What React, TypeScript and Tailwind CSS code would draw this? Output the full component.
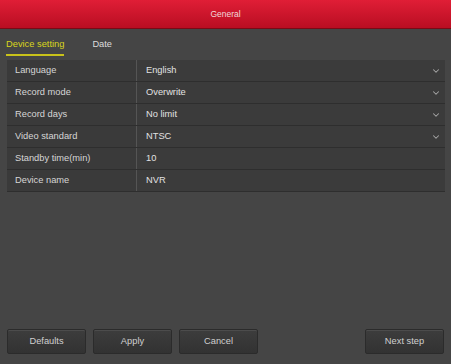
import { ChevronDown } from 'lucide-react'

interface Row {
  label: string
  value: string
  select?: boolean
}

const rows: Row[] = [
  { label: 'Language', value: 'English', select: true },
  { label: 'Record mode', value: 'Overwrite', select: true },
  { label: 'Record days', value: 'No limit', select: true },
  { label: 'Video standard', value: 'NTSC', select: true },
  { label: 'Standby time(min)', value: '10' },
  { label: 'Device name', value: 'NVR' },
]

function Button({ label, className }: { label: string; className?: string }) {
  return (
    <button
      className={`h-[25px] w-[79px] rounded-[2px] border border-[#2b2b2b] bg-gradient-to-b from-[#3d3d3d] to-[#323232] text-[9.3px] text-[#d0d0d0] shadow-[inset_0_1px_0_#4c4c4c] ${className ?? ''}`}
    >
      {label}
    </button>
  )
}

export default function App() {
  return (
    <div className="flex h-[364px] w-[451px] flex-col bg-[#454545] font-['Liberation_Sans',Arial,sans-serif] text-[9.3px]">
      <div className="flex h-[28px] items-center justify-center bg-gradient-to-b from-[#e01e36] to-[#b90d22] text-[8.5px] text-[#f3d6d9] shadow-[0_1px_0_#7a0a16]">
        General
      </div>

      <div className="flex h-[32px] items-end gap-[28px] px-[6px] pb-[8px]">
        <div className="relative text-[#d9d61c]">
          Device setting
          <div className="absolute -bottom-[4px] left-0 h-[2px] w-full bg-[#c9c21a]" />
        </div>
        <div className="text-[#dcdcdc]">Date</div>
      </div>

      <div className="mx-[7px] flex w-[438px] flex-col bg-[#2f2f2f]">
        {rows.map((row) => (
          <div key={row.label} className="flex h-[22px] border-b border-[#2e2e2e]">
            <div className="flex w-[130px] items-center border-r border-[#555] bg-[#3a3a3a] pl-[8px] text-[#d6d6d6]">
              {row.label}
            </div>
            <div className="flex flex-1 items-center justify-between bg-[#3b3b3b] pl-[9px] pr-[4px] text-[#e2e2e2]">
              <span>{row.value}</span>
              {row.select && <ChevronDown size={10} strokeWidth={2.5} className="text-[#a8a8a8]" />}
            </div>
          </div>
        ))}
      </div>

      <div className="mt-auto flex items-center gap-[7px] px-[7px] pb-[10px]">
        <Button label="Defaults" />
        <Button label="Apply" />
        <Button label="Cancel" />
        <Button label="Next step" className="ml-auto" />
      </div>
    </div>
  )
}
